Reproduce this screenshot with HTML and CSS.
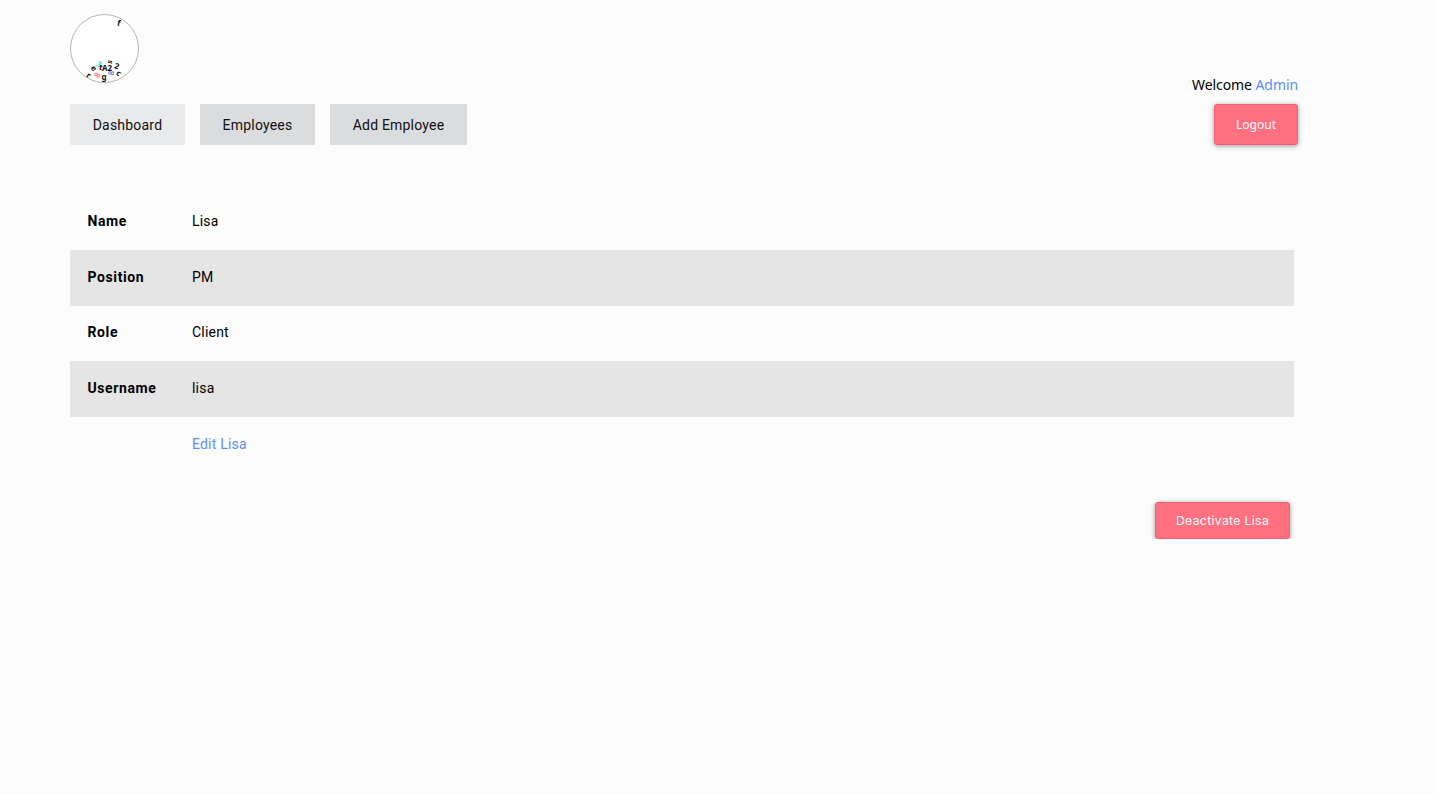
FILE: index.html
```html
<!DOCTYPE html>
<html lang="en">
<head>
    <meta charset="UTF-8">
    <meta name="viewport" content="width=device-width, initial-scale=1.0">
    <title>Lisa - Employee</title>
    <link rel="stylesheet" href="styles.css">
</head>
<body>

    <div class="page">
        <div class="logo">
            <svg width="69" height="69" viewBox="0 0 69 69">
                <circle cx="34.5" cy="34.5" r="34" fill="#fff" stroke="#b5b5b5" stroke-width="1"/>
                <text x="49" y="12" class="logo-char" transform="rotate(12 49 9)">f</text>
                <text x="29" y="53" class="logo-char logo-green" transform="rotate(30 29 50)">3</text>
                <text x="40" y="50" class="logo-small" transform="rotate(-70 40 48)">s</text>
                <text x="47" y="55" class="logo-char" transform="rotate(20 47 52)">2</text>
                <text x="37" y="57" class="logo-char">A2</text>
                <text x="31" y="56" class="logo-char" transform="rotate(15 31 53)">t</text>
                <text x="24" y="57" class="logo-char" transform="rotate(40 24 54)">e</text>
                <text x="19" y="64" class="logo-char" transform="rotate(35 19 61)">r</text>
                <text x="27" y="64" class="logo-char logo-red" transform="rotate(-60 27 61)">8</text>
                <text x="34" y="66" class="logo-char">g</text>
                <text x="41" y="62" class="logo-char logo-blue" transform="rotate(-80 41 59)">8</text>
                <text x="49" y="62" class="logo-char" transform="rotate(40 49 59)">c</text>
            </svg>
        </div>

        <div class="welcome">Welcome <a href="#">Admin</a></div>

        <div class="topbar">
            <nav class="nav">
                <a href="#" class="nav-item nav-active">Dashboard</a>
                <a href="#" class="nav-item">Employees</a>
                <a href="#" class="nav-item nav-wide">Add Employee</a>
            </nav>
            <button class="btn btn-logout">Logout</button>
        </div>

        <table class="details">
            <tr><th>Name</th><td>Lisa</td></tr>
            <tr><th>Position</th><td>PM</td></tr>
            <tr><th>Role</th><td>Client</td></tr>
            <tr><th>Username</th><td>lisa</td></tr>
            <tr class="edit-row"><th></th><td><a href="#">Edit Lisa</a></td></tr>
        </table>

        <div class="actions">
            <button class="btn btn-deactivate">Deactivate Lisa</button>
        </div>
    </div>

</body>
</html>
```

FILE: styles.css
```css
body {
    margin: 0;
    padding: 0;
    font-family: "Noto Sans", "Open Sans", sans-serif;
    font-size: 14px;
    background-color: #fcfcfc;
    color: #000;
}
a {
    color: #5b8ff9;
    text-decoration: none;
}
.page {
    width: 1228px;
    margin-left: 70px;
    padding-top: 14px;
}
.logo {
    height: 69px;
}
.logo svg {
    display: block;
}
.logo-char {
    font-family: "Noto Sans", sans-serif;
    font-size: 8px;
    font-weight: 700;
    text-anchor: middle;
    fill: #111;
}
.logo-small {
    font-family: "Noto Sans", sans-serif;
    font-size: 7px;
    font-weight: 700;
    text-anchor: middle;
    fill: #111;
}
.logo-char.logo-green {
    fill: #1fe6b0;
}
.logo-char.logo-red {
    fill: #ff7a85;
}
.logo-char.logo-blue {
    fill: #6f8ff5;
}
.welcome {
    height: 21px;
    line-height: 3px;
    text-align: right;
    letter-spacing: -0.08px;
}
.topbar {
    display: flex;
    justify-content: space-between;
    height: 41px;
}
.nav {
    display: flex;
    gap: 15px;
}
.nav-item {
    display: flex;
    align-items: center;
    justify-content: center;
    width: 115px;
    background-color: #dbdcde;
    color: #111;
    font-family: Roboto, sans-serif;
    letter-spacing: 0.2px;
}
.nav-active {
    background-color: #e9eaec;
}
.nav-wide {
    width: 137px;
}
.btn {
    background-color: #ff7081;
    color: #fff;
    border: 1px solid #f45f72;
    border-radius: 3px;
    box-shadow: 0 1px 5px rgba(0, 0, 0, 0.4);
    font-family: "Noto Sans", sans-serif;
    font-size: 12px;
    cursor: pointer;
}
.btn-logout {
    width: 84px;
}
.details {
    width: 1224px;
    margin-top: 49.33px;
    border-collapse: collapse;
    font-family: Roboto, sans-serif;
    letter-spacing: 0.2px;
}
.details tr {
    height: 55.67px;
}
.details th {
    width: 104px;
    padding: 0 0 2px 17.5px;
    text-align: left;
    font-weight: 700;
    letter-spacing: 0.6px;
}
.details td {
    padding: 0 0 2px 0.5px;
}
.details tr:nth-child(even) {
    background-color: #e5e5e5;
}
.edit-row a {
    display: block;
}
.actions {
    display: flex;
    justify-content: flex-end;
    width: 1220px;
    margin-top: 29.3px;
}
.btn-deactivate {
    width: 135px;
    height: 37px;
    font-family: Inter, sans-serif;
    font-size: 12.2px;
    letter-spacing: 0.35px;
}
```
